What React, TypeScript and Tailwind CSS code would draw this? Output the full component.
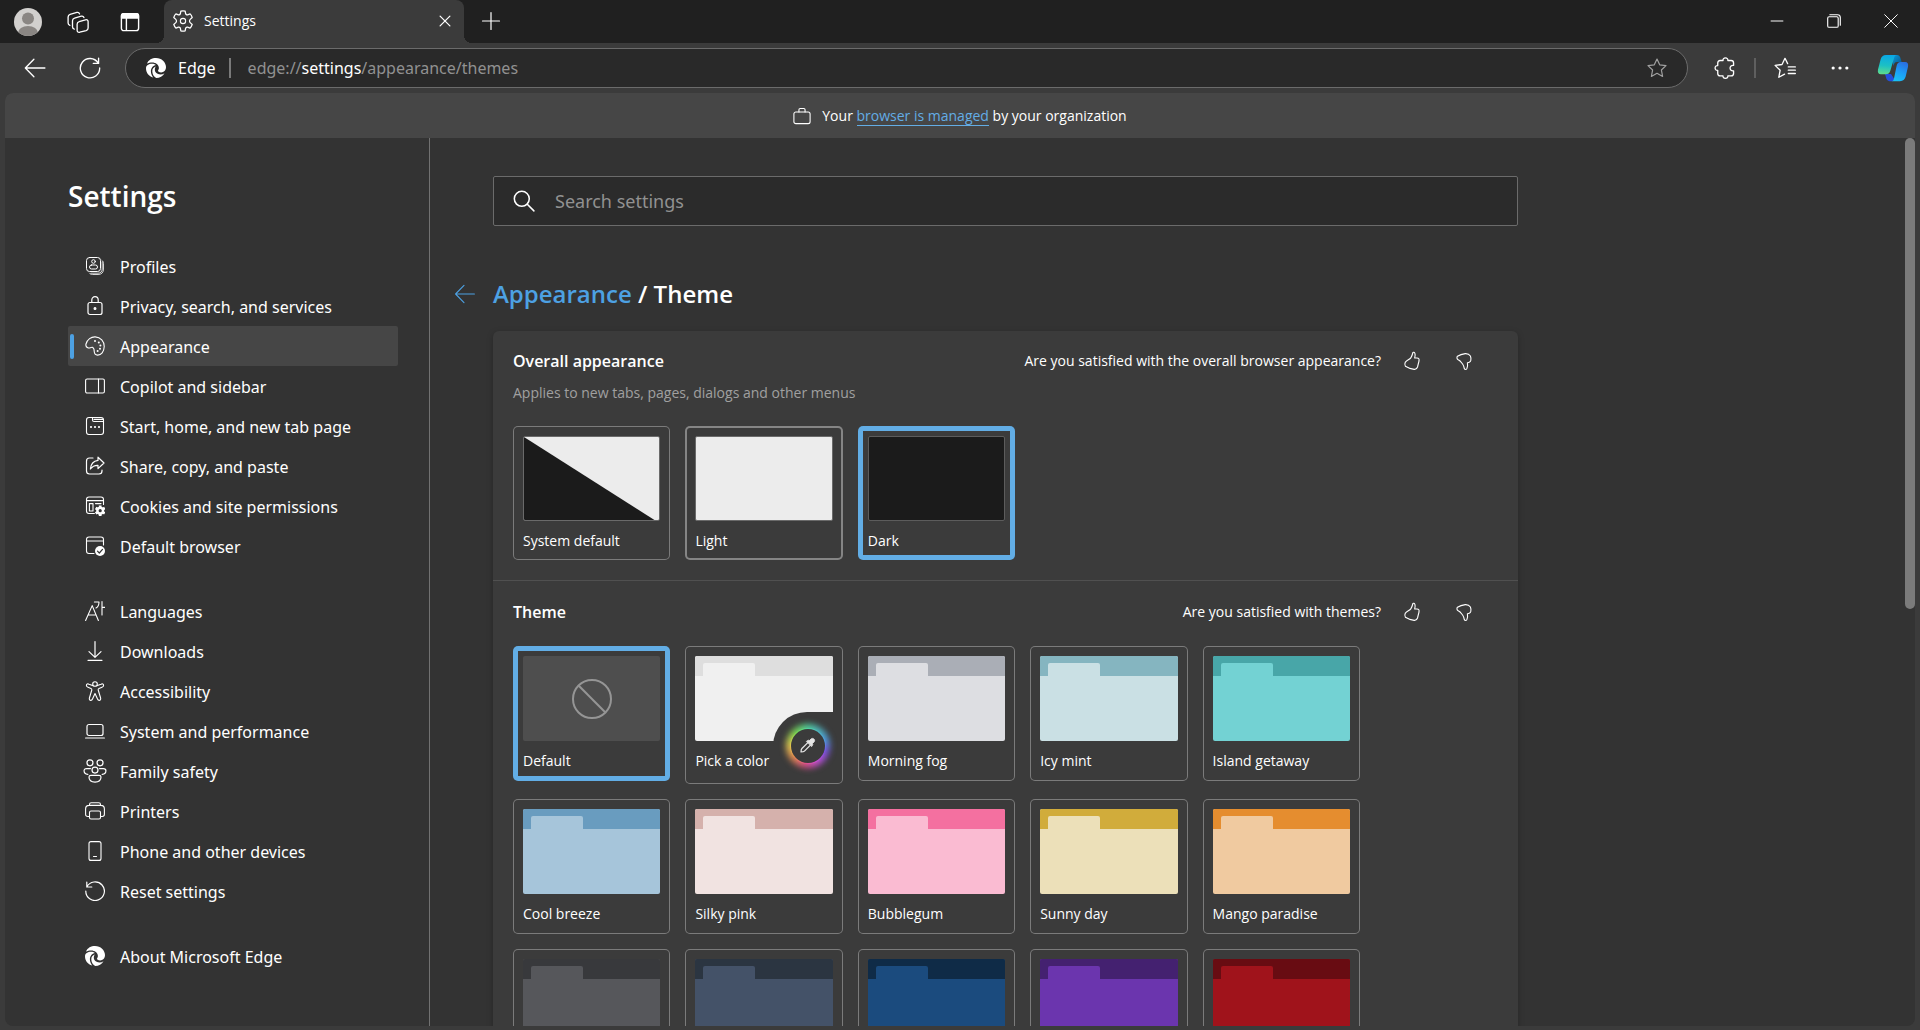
import type { ReactNode } from "react";

/* ---------- icon primitives ---------- */

function Icon({ children, size = 20, w = 1 }: { children: ReactNode; size?: number; w?: number }) {
  return (
    <svg
      width={size}
      height={size}
      viewBox="0 0 20 20"
      fill="none"
      stroke="currentColor"
      strokeWidth={w}
      strokeLinecap="round"
      strokeLinejoin="round"
      aria-hidden="true"
      className="shrink-0"
    >
      {children}
    </svg>
  );
}

const GEAR =
  "M8.3 2.2 C9.4 1.9 10.6 1.9 11.7 2.2 L12.1 4.3 C12.3 4.9 13 5.3 13.6 5.1 L15.6 4.4 C16.4 5.2 17 6.2 17.3 7.3 L15.7 8.7 C15 9.3 15 10.7 15.7 11.3 L17.3 12.7 C17 13.8 16.4 14.8 15.6 15.6 L13.6 14.9 C13 14.7 12.3 15.1 12.1 15.7 L11.7 17.8 C10.6 18.1 9.4 18.1 8.3 17.8 L7.9 15.7 C7.7 15.1 7 14.7 6.4 14.9 L4.4 15.6 C3.6 14.8 3 13.8 2.7 12.7 L4.3 11.3 C5 10.7 5 9.3 4.3 8.7 L2.7 7.3 C3 6.2 3.6 5.2 4.4 4.4 L6.4 5.1 C7 5.3 7.7 4.9 7.9 4.3 Z";

function EdgeLogo() {
  return (
    <svg width="20" height="20" viewBox="0 0 20 20" fill="currentColor" aria-hidden="true" className="shrink-0">
      <path d="M1 5.6 C2.6 1.8 6 0 10 0 C15.6 0 20 4.3 20 9.1 C20 12.4 17.8 14.4 15.2 14.4 C13 14.4 11.9 13.6 11.9 12.8 C11.9 12.2 12.9 11.6 12.9 9.9 C12.9 6.6 9.6 4.4 6.2 4.4 C4.1 4.4 2.3 4.8 1 5.6 Z" />
      <path d="M0 10.2 C0 7.3 2.8 5.7 5.9 5.7 C7.5 5.7 8.9 6.2 9.9 7 C7.2 7.5 4.9 9.9 4.9 13.2 C4.9 15.6 5.8 17.6 7.2 19.5 C3 18.4 0 14.7 0 10.2 Z" />
      <path d="M9.9 8.6 C9.2 9.4 8.8 10.4 8.8 11.6 C8.8 14.4 11.1 16.4 14.4 16.4 C16 16.4 17.4 16 18.5 15.2 C16.9 18.2 13.7 20 10.2 20 C7.7 18.6 6.3 16 6.3 13.2 C6.3 11 7.6 9.2 9.9 8.6 Z" />
    </svg>
  );
}

function CopilotLogo() {
  return (
    <svg width="32" height="28" viewBox="0 0 32 28" aria-hidden="true">
      <defs>
        <linearGradient id="cpLeft" x1="0.4" y1="0" x2="0.3" y2="1">
          <stop offset="0" stopColor="#0aa8e6" />
          <stop offset="0.55" stopColor="#1cc0c4" />
          <stop offset="1" stopColor="#5fdc8c" />
        </linearGradient>
        <linearGradient id="cpRight" x1="0.7" y1="0" x2="0.3" y2="1">
          <stop offset="0" stopColor="#2a6fe0" />
          <stop offset="0.5" stopColor="#1c9cf8" />
          <stop offset="1" stopColor="#19c2f4" />
        </linearGradient>
        <linearGradient id="cpTop" x1="0" y1="0" x2="1" y2="1">
          <stop offset="0" stopColor="#0aa0e0" />
          <stop offset="1" stopColor="#0b4f86" />
        </linearGradient>
      </defs>
      <path d="M14 1 H20 C22 1 23 2.4 23.6 4.4 L24.6 8 H20 C17.6 8 17 10 16.4 12 Z" fill="url(#cpTop)" />
      <path d="M8 20 H14 L18 26 C17 27 15.6 27.2 14 27.2 H12.6 C10.4 27.2 9.6 25.6 9 23.6 Z" fill="#2450dc" />
      <path d="M9 1 H20 C18.4 1 17.6 2.2 17 4.2 L13.4 16.4 C12.6 19 11.2 20.2 8.6 20.2 H4 C1.4 20.2 0.4 18.2 1 15.4 L3.6 5.4 C4.4 2.6 6 1 9 1 Z" fill="url(#cpLeft)" />
      <path d="M23 27.2 H14.6 C16 27.2 16.6 26 17 24.4 L19.6 12 C20.2 9.2 21.4 8 23.8 8 H28 C30.6 8 31.6 10 31 12.8 L28.6 22.8 C27.8 25.6 26 27.2 23 27.2 Z" fill="url(#cpRight)" />
    </svg>
  );
}

function ThumbUp() {
  return (
    <Icon size={20} w={1.1}>
      <path d="M10.9 1.5 C10.4 3.6 9.7 5.6 8.8 6.8 C7.6 8.4 4.6 9.4 3.2 11.4 C2.6 12.6 2.7 14 3.4 15.2 C6 16.8 9.6 18 12.2 18.4 C14 18.6 15 17.4 15.5 16 L17 10 C17.4 8 16.8 7 15 7 H12.7 C13.2 5.2 13.4 3.6 12.9 2.4 C12.5 1.4 11.2 0.9 10.9 1.5 Z" />
    </Icon>
  );
}

function ThumbDown() {
  return (
    <Icon size={20} w={1.1}>
      <path d="M3.5 5.2 C5.6 3.8 8.6 2.9 11.3 2.6 C13.6 2.5 15.4 3.4 16.4 5 C17 6.4 17.1 8 16.8 9.4 C16.3 11 15 11.8 13.4 11.8 C13.8 13.8 13.6 16.2 12.8 17.8 C12.2 18.8 10.8 18.8 10.4 17.8 C10 16 9.6 14.4 8.6 13 C7.2 11.2 6.4 9.8 4.2 8.8 C2.8 8 2.6 6.2 3.5 5.2 Z" />
    </Icon>
  );
}

/* ---------- side navigation ---------- */

type NavItem = { label: string; icon: ReactNode; active?: boolean };

const NAV_GROUPS: NavItem[][] = [
  [
    {
      label: "Profiles",
      icon: (
        <Icon>
          <rect x="1.5" y="1.5" width="14" height="14" rx="3" />
          <path d="M17 4.5 C18 5.2 18.5 6 18.5 7.5 V13 C18.5 16.5 16.5 18.5 13 18.5 H7.5 C6 18.5 5 18 4.5 17.2 M17.2 6 V13 C17.2 15.6 15.6 17.2 13 17.2 H6" strokeWidth="0.8" />
          <circle cx="8.5" cy="5.5" r="1.8" />
          <rect x="4.5" y="9" width="8" height="4" rx="2" />
        </Icon>
      ),
    },
    {
      label: "Privacy, search, and services",
      icon: (
        <Icon w={1.2}>
          <rect x="3" y="6.5" width="14" height="12" rx="2" />
          <path d="M6.8 6.5 V4 C6.8 2 8.2 0.7 10 0.7 C11.8 0.7 13.2 2 13.2 4 V6.5" />
          <circle cx="10" cy="12.5" r="0.9" fill="currentColor" />
        </Icon>
      ),
    },
    {
      label: "Appearance",
      active: true,
      icon: (
        <Icon w={1.1}>
          <path d="M1 8 C2.2 3.4 6.2 0.7 10.2 0.9 C15.6 1.1 19.4 5.4 19.2 10.8 C19 15.8 16.2 19.2 12.6 19.1 C10.4 19 9.3 17.4 9.2 15.2 C9.2 13.4 9.2 11.9 7.6 11.4 C5.8 10.9 4.6 12.6 2.8 11.8 C1 11 0.6 9.6 1 8 Z" />
          <g fill="currentColor" stroke="none">
            <circle cx="10" cy="5" r="1" />
            <circle cx="13.8" cy="6.4" r="1" />
            <circle cx="15.4" cy="9.6" r="1" />
            <circle cx="15" cy="12.8" r="1" />
            <circle cx="12.6" cy="15" r="1" />
          </g>
        </Icon>
      ),
    },
    {
      label: "Copilot and sidebar",
      icon: (
        <Icon w={1.1}>
          <rect x="0.6" y="3" width="18.8" height="14" rx="1.5" />
          <path d="M13.5 3 V17" />
        </Icon>
      ),
    },
    {
      label: "Start, home, and new tab page",
      icon: (
        <Icon w={1.1}>
          <rect x="1.5" y="1.5" width="17" height="17" rx="2.5" />
          <path d="M7.5 1.5 V4 C7.5 5 8 5.5 9 5.5 H18.5 M9 3.4 H18" />
          <path d="M6 11 h.01 M10 11 h.01 M14 11 h.01" strokeWidth="2.2" />
        </Icon>
      ),
    },
    {
      label: "Share, copy, and paste",
      icon: (
        <Icon w={1.2}>
          <path d="M8 2 H4.5 C2.8 2 1.5 3.3 1.5 5 V15 C1.5 16.7 2.8 18 4.5 18 H14 C15.7 18 17 16.7 17 15 V14" />
          <path d="M13 1.2 L19 7 L13 12.6 V9.4 C9.4 9.2 7.4 10.4 5.4 13 C5.8 8.4 8.6 5 13 4.4 Z" />
        </Icon>
      ),
    },
    {
      label: "Cookies and site permissions",
      icon: (
        <Icon w={1.1}>
          <path d="M9.4 17.5 H4 C2.5 17.5 1.5 16.5 1.5 15 V3.5 C1.5 2 2.5 1 4 1 H16 C17.5 1 18.5 2 18.5 3.5 V8.5 M1.5 4.6 H18.5 M10.5 7.6 H16" />
          <rect x="4.4" y="7.6" width="3.6" height="7.4" />
          <path d="M15.2 9.4 V20 M10.6 12 L19.8 17.4 M10.6 17.4 L19.8 12" strokeWidth="2.8" strokeLinecap="butt" />
          <circle cx="15.2" cy="14.7" r="2.8" strokeWidth="2.4" />
          <circle cx="15.2" cy="14.7" r="1.6" fill="#333333" stroke="none" />
        </Icon>
      ),
    },
    {
      label: "Default browser",
      icon: (
        <Icon w={1.1}>
          <path d="M9 17.5 H4 C2.5 17.5 1.5 16.5 1.5 15 V3.5 C1.5 2 2.5 1 4 1 H16 C17.5 1 18.5 2 18.5 3.5 V9 M1.5 5 H18.5" />
          <circle cx="15" cy="15" r="5" fill="currentColor" stroke="none" />
          <path d="M12.5 15.2 L14.3 17 L17.5 13.4" stroke="#333333" strokeWidth="1.2" />
        </Icon>
      ),
    },
  ],
  [
    {
      label: "Languages",
      icon: (
        <Icon w={1.1}>
          <path d="M0.6 19.5 L7.2 4.6 L13.4 19.5 M3.2 14 H11.2" />
          <path d="M9.4 1 H14 C14 4 13 6 11 7 M17 0.6 V14 M17 6.4 H19.8" />
        </Icon>
      ),
    },
    {
      label: "Downloads",
      icon: (
        <Icon w={1.2}>
          <path d="M10 0.6 V16 M4 10.6 L10 16.4 L16 10.6 M3 19.3 H17" />
        </Icon>
      ),
    },
    {
      label: "Accessibility",
      icon: (
        <Icon w={1.1}>
          <circle cx="10" cy="3" r="2.3" />
          <path d="M7.6 4.6 L4 3.2 C2.6 2.6 1.4 3 1.4 4.4 C1.4 5.4 2.2 5.9 3 6.2 L6 7.4 C6.8 7.8 7 8.2 6.8 9 L4.4 17 C4 18.4 4.8 19.4 5.8 19.4 C6.6 19.4 7.2 18.8 7.5 18 L10 12.6 L12.5 18 C12.8 18.8 13.4 19.4 14.2 19.4 C15.2 19.4 16 18.4 15.6 17 L13.2 9 C13 8.2 13.2 7.8 14 7.4 L17 6.2 C17.8 5.9 18.6 5.4 18.6 4.4 C18.6 3 17.4 2.6 16 3.2 L12.4 4.6" />
        </Icon>
      ),
    },
    {
      label: "System and performance",
      icon: (
        <Icon w={1.2}>
          <rect x="2" y="3.5" width="16" height="11" rx="2" />
          <path d="M0.6 17 H19.4" />
        </Icon>
      ),
    },
    {
      label: "Family safety",
      icon: (
        <Icon size={24} w={1}>
          <circle cx="5.8" cy="3.2" r="2.5" />
          <circle cx="14.2" cy="3.2" r="2.5" />
          <circle cx="10" cy="9.2" r="2.5" />
          <path d="M6.2 8 H3 C1.6 8 0.9 8.6 0.9 9.8 C0.9 11.6 2 12.6 4 12.8 M13.8 8 H17 C18.4 8 19.1 8.6 19.1 9.8 C19.1 11.6 18 12.6 16 12.8" />
          <path d="M6.6 13.6 H13.4 C14.4 13.6 15 14.1 15 15 C15 17.6 13 19.2 10 19.2 C7 19.2 5 17.6 5 15 C5 14.1 5.6 13.6 6.6 13.6 Z" />
        </Icon>
      ),
    },
    {
      label: "Printers",
      icon: (
        <Icon w={1.1}>
          <path d="M4.5 15.5 H2.8 C1.4 15.5 0.6 14.7 0.6 13.3 V8 C0.6 5.8 2 4.4 4.2 4.4 H15.8 C18 4.4 19.4 5.8 19.4 8 V13.3 C19.4 14.7 18.6 15.5 17.2 15.5 H15.5 M4.5 4.4 V3.4 C4.5 2.4 5.2 1.7 6.2 1.7 H13.8 C14.8 1.7 15.5 2.4 15.5 3.4 V4.4" />
          <rect x="4.5" y="10" width="11" height="8" rx="1.5" />
        </Icon>
      ),
    },
    {
      label: "Phone and other devices",
      icon: (
        <Icon w={1.1}>
          <rect x="4" y="0.6" width="12" height="18.8" rx="2" />
          <path d="M8.5 15.5 H11.5" />
        </Icon>
      ),
    },
    {
      label: "Reset settings",
      icon: (
        <Icon w={1.2}>
          <path d="M1.8 1 V6 H6.8 M1.8 6 A9.3 9.3 0 1 1 0.8 10" />
        </Icon>
      ),
    },
  ],
  [{ label: "About Microsoft Edge", icon: <EdgeLogo /> }],
];

function SideNav() {
  return (
    <aside className="w-[425px] shrink-0 border-r border-[#717171] pt-10 pr-[31px] pl-[63px]">
      <h1 className="text-[28px] leading-9 font-semibold">Settings</h1>
      <nav aria-label="Settings sections" className="mt-8 flex flex-col gap-[25px]">
        {NAV_GROUPS.map((group) => (
          <ul key={group[0].label}>
            {group.map((item) => (
              <li key={item.label}>
                <a
                  href={"#" + item.label}
                  aria-current={item.active ? "page" : undefined}
                  className={
                    item.active
                      ? "flex h-10 items-center rounded-xs bg-[#464646] pl-0.5"
                      : "flex h-10 items-center pl-0.5"
                  }
                >
                  <span className={item.active ? "h-[25px] w-1 rounded-xs bg-[#4da1e3]" : "w-1"} />
                  <span className="flex w-[42px] justify-center">{item.icon}</span>
                  <span className="pt-px pl-1 font-['Noto_Sans',sans-serif] text-base">{item.label}</span>
                </a>
              </li>
            ))}
          </ul>
        ))}
      </nav>
    </aside>
  );
}

/* ---------- tiles ---------- */

function Tile({
  label,
  selected,
  bold,
  padding = "pb-[10px]",
  name,
  children,
}: {
  label?: string;
  selected?: boolean;
  bold?: boolean;
  padding?: string;
  name: string;
  children: ReactNode;
}) {
  const ring = selected
    ? "shadow-[inset_0_0_0_5px_#62ade5]"
    : bold
      ? "shadow-[inset_0_0_0_2px_#858585]"
      : "shadow-[inset_0_0_0_1px_#7b7b7b]";
  return (
    <label className={`relative block rounded-[5px] px-[10px] pt-[10px] ${padding} ${ring}`}>
      <input type="radio" name={name} defaultChecked={selected} className="sr-only" />
      {children}
      <span className="mt-[10px] block h-5 text-sm whitespace-nowrap">{label}</span>
    </label>
  );
}

function FolderThumb({ top, body }: { top: string; body: string }) {
  return (
    <span className={`flex h-[85px] flex-col overflow-hidden rounded-xs ${body}`}>
      <span className={`flex h-5 items-end pl-2 ${top}`}>
        <span className={`h-[13px] w-[52px] rounded-t-xs ${body}`} />
      </span>
    </span>
  );
}

function ColorPickerBadge() {
  return (
    <span className="absolute right-[10px] bottom-[5px] flex h-[67px] w-[60px] items-center justify-center rounded-tl-[34px] bg-[#3b3b3b] pl-[10px]">
      <span className="relative flex size-9 items-center justify-center">
        <span className="absolute -inset-1 rounded-full bg-[conic-gradient(from_0deg,#4fd0a0,#4f9be0_20%,#7a4fe0_30%,#c84fd0_42%,#e04f8a_52%,#e0884f_64%,#e0c84f_76%,#7ad84f_88%,#4fd0a0)] blur-[3px]" />
        <span className="absolute inset-0 rounded-full bg-[conic-gradient(from_0deg,#4fd0a0,#4f9be0_20%,#7a4fe0_30%,#c84fd0_42%,#e04f8a_52%,#e0884f_64%,#e0c84f_76%,#7ad84f_88%,#4fd0a0)]" />
        <span className="relative flex size-[34px] items-center justify-center rounded-full bg-[#3b3b3b] text-[#e6e6e6]">
          <Icon size={17} w={1.5}>
            <path d="M10.4 6.6 L3.4 13.6 C2.6 14.4 2.4 15.4 2.4 17.6 C4.6 17.6 5.6 17.4 6.4 16.6 L13.4 9.6" />
            <path d="M9 5 L11 3.8 L12.4 4.2 L14 2.4 C15 1.4 16.6 1.4 17.6 2.4 C18.6 3.4 18.6 5 17.6 6 L15.8 7.6 L16.2 9 L15 11 Z" fill="currentColor" strokeWidth="1" />
          </Icon>
        </span>
      </span>
    </span>
  );
}

const THEMES: { label?: string; top: string; body: string }[] = [
  { label: "Morning fog", top: "bg-[#aaaeb6]", body: "bg-[#dddee2]" },
  { label: "Icy mint", top: "bg-[#85b5c0]", body: "bg-[#cae0e4]" },
  { label: "Island getaway", top: "bg-[#48a6a8]", body: "bg-[#73d2d3]" },
  { label: "Cool breeze", top: "bg-[#699cbf]", body: "bg-[#a6c5da]" },
  { label: "Silky pink", top: "bg-[#d5b1ac]", body: "bg-[#f1e3e1]" },
  { label: "Bubblegum", top: "bg-[#f470a0]", body: "bg-[#fabbd2]" },
  { label: "Sunny day", top: "bg-[#d1ac3b]", body: "bg-[#ece0b9]" },
  { label: "Mango paradise", top: "bg-[#e58d2f]", body: "bg-[#f0caa0]" },
  { top: "bg-[#38393c]", body: "bg-[#56575b]" },
  { top: "bg-[#2b3541]", body: "bg-[#445268]" },
  { top: "bg-[#0f2b47]", body: "bg-[#1b4b7e]" },
  { top: "bg-[#442170]", body: "bg-[#6b35ae]" },
  { top: "bg-[#680c12]", body: "bg-[#a0131b]" },
];

function SectionHead({ title, question }: { title: string; question: string }) {
  return (
    <div className="flex items-center">
      <h3 className="flex-1 text-base leading-6 font-semibold">{title}</h3>
      <p className="text-sm">{question}</p>
      <div className="flex gap-8 pr-6 pl-[21px]">
        <button type="button" aria-label="Yes">
          <ThumbUp />
        </button>
        <button type="button" aria-label="No">
          <ThumbDown />
        </button>
      </div>
    </div>
  );
}

function ThemeCard() {
  return (
    <section className="mt-[21px] rounded-md bg-[#3b3b3b] shadow-[0_2px_6px_rgba(0,0,0,0.25)]">
      <div className="px-5 pt-[18px] pb-5">
        <SectionHead title="Overall appearance" question="Are you satisfied with the overall browser appearance?" />
        <p className="mt-[10px] text-sm leading-5 text-[#a0a0a0]">
          Applies to new tabs, pages, dialogs and other menus
        </p>
        <div className="mt-[23px] grid max-w-[847px] grid-cols-5 gap-[15px]">
          <Tile name="appearance" label="System default" padding="pb-[9px]">
            <svg viewBox="0 0 137 85" preserveAspectRatio="none" className="block h-[85px] w-full rounded-xs border border-[#6a6a6a]" aria-hidden="true">
              <rect width="137" height="85" fill="#ececec" />
              <path d="M0 0 L132 85 H0 Z" fill="#1b1b1b" />
            </svg>
          </Tile>
          <Tile name="appearance" label="Light" bold padding="pb-[9px]">
            <span className="block h-[85px] rounded-xs border border-[#6a6a6a] bg-[#ececec]" />
          </Tile>
          <Tile name="appearance" label="Dark" selected padding="pb-[9px]">
            <span className="block h-[85px] rounded-xs border border-[#5c5c5c] bg-[#1b1b1b]" />
          </Tile>
        </div>
      </div>
      <div className="border-t border-[#505050] px-5 pt-[19px] pb-5">
        <SectionHead title="Theme" question="Are you satisfied with themes?" />
        <div className="mt-[22px] grid max-w-[847px] grid-cols-5 items-start gap-[15px]">
          <Tile name="theme" label="Default" selected>
            <span className="flex h-[85px] items-center justify-center rounded-xs bg-[#4e4e4e] text-[#959595]">
              <Icon size={40}>
                <circle cx="10" cy="10" r="9.5" />
                <path d="M3.4 3.4 L16.6 16.6" />
              </Icon>
            </span>
          </Tile>
          <Tile name="theme" label="Pick a color" padding="pb-[13px]">
            <FolderThumb top="bg-[#dedede]" body="bg-[#f0f0f0]" />
            <ColorPickerBadge />
          </Tile>
          {THEMES.map((theme) => (
            <Tile key={theme.top} name="theme" label={theme.label}>
              <FolderThumb top={theme.top} body={theme.body} />
            </Tile>
          ))}
        </div>
      </div>
    </section>
  );
}

/* ---------- browser chrome ---------- */

function TabStrip() {
  return (
    <header className="flex h-[43px] items-center bg-[#202020]">
      <div className="flex w-[164px] items-center pl-[14px]">
        <button type="button" aria-label="Profile">
          <svg width="28" height="28" viewBox="0 0 28 28" aria-hidden="true">
            <clipPath id="avatar">
              <circle cx="14" cy="14" r="14" />
            </clipPath>
            <g clipPath="url(#avatar)">
              <rect width="28" height="28" fill="#d2d0ce" />
              <circle cx="14" cy="10.5" r="6" fill="#8a8683" />
              <ellipse cx="14" cy="25" rx="10" ry="7" fill="#8a8683" />
            </g>
          </svg>
        </button>
        <button type="button" aria-label="Workspaces" className="ml-[25px]">
          <Icon size={22} w={1.2}>
            <path d="M11 9.6 L16.8 8 C18.2 7.6 19.2 8.4 19.2 9.8 V15.4 C19.2 16.6 18.6 17.4 17.4 17.8 L11.6 19.3 C10.2 19.6 9.2 18.9 9.2 17.5 V12 C9.2 10.7 9.8 9.9 11 9.6 Z" />
            <path d="M6.6 16.4 C5.4 16.2 5 15.5 5 14.4 V8.8 C5 7.5 5.6 6.7 6.8 6.4 L13 4.7 C14.2 4.4 15 4.9 15.4 6" />
            <path d="M2.6 13 C1.5 12.7 1 12 1 11 V5.4 C1 4.1 1.6 3.4 2.8 3 L9 1.3 C10.2 1 11 1.5 11.4 2.6" />
          </Icon>
        </button>
        <button type="button" aria-label="Tab actions" className="ml-[31px]">
          <Icon size={20} w={1.4}>
            <rect x="1.4" y="1.6" width="17.2" height="17" rx="2.4" />
            <path d="M1.6 3.4 C1.6 2.4 2.4 1.6 3.4 1.6 H16.6 C17.6 1.6 18.4 2.4 18.4 3.4 V6 H1.6 Z" fill="currentColor" />
            <path d="M6.4 6 V18.4" />
          </Icon>
        </button>
      </div>
      <div className="relative flex h-full w-[300px] items-center rounded-t-lg bg-[#3b3b3b] pr-3 pb-0.5 pl-2">
        <span className="absolute bottom-0 -left-2 size-2 bg-[radial-gradient(circle_at_0_0,#202020_8px,#3b3b3b_8px)]" />
        <span className="absolute -right-2 bottom-0 size-2 bg-[radial-gradient(circle_at_100%_0,#202020_8px,#3b3b3b_8px)]" />
        <Icon size={22}>
          <path d={GEAR} transform="translate(-1.5 -1.5) scale(1.15)" />
          <circle cx="10" cy="10" r="2.4" />
        </Icon>
        <span className="flex-1 pl-[10px] text-sm">Settings</span>
        <button type="button" aria-label="Close tab">
          <Icon size={14} w={1.8}>
            <path d="M3 3 L17 17 M17 3 L3 17" />
          </Icon>
        </button>
      </div>
      <button type="button" aria-label="New tab" className="ml-[17px] pb-0.5">
        <Icon size={20} w={1.2}>
          <path d="M10 1.5 V18.5 M1.5 10 H18.5" />
        </Icon>
      </button>
      <div className="ml-auto flex items-center gap-[43px] pr-[22px] pb-0.5">
        <button type="button" aria-label="Minimize">
          <Icon size={14} w={1.4}>
            <path d="M1 10 H19" strokeLinecap="butt" />
          </Icon>
        </button>
        <button type="button" aria-label="Restore">
          <Icon size={14} w={1.6}>
            <rect x="1" y="4" width="15" height="15" rx="2" />
            <path d="M4 1 H15 C17.6 1 19 2.4 19 5 V16" />
          </Icon>
        </button>
        <button type="button" aria-label="Close window">
          <Icon size={14} w={1.4}>
            <path d="M1 1 L19 19 M19 1 L1 19" />
          </Icon>
        </button>
      </div>
    </header>
  );
}

const STAR = "M10 1 L12.7 6.8 L19 7.6 L14.4 12 L15.6 18.4 L10 15.3 L4.4 18.4 L5.6 12 L1 7.6 L7.3 6.8 Z";

function Toolbar() {
  return (
    <div className="flex h-[50px] items-center bg-[#3b3b3b] pr-[11px] pl-6">
      <button type="button" aria-label="Back">
        <Icon size={22} w={1.2}>
          <path d="M19 10 H1.4 M9 2 L1.2 10 L9 18" />
        </Icon>
      </button>
      <button type="button" aria-label="Refresh" className="ml-[33px]">
        <Icon size={22} w={1.2}>
          <path d="M17.4 5.4 A8.8 8.8 0 1 0 18.8 10 M17.8 1 V5.8 H13" />
        </Icon>
      </button>
      <div className="ml-6 flex h-10 flex-1 items-center rounded-full border border-[#6b6b6b] bg-[#292929] px-5 font-['Noto_Sans',sans-serif]">
        <EdgeLogo />
        <span className="pl-3 text-base">Edge</span>
        <span className="mr-[17px] ml-[13px] h-5 w-0.5 bg-[#7a7a7a]" />
        <p className="flex-1 text-base text-[#919191]" aria-label="Address">
          edge://<span className="text-white">settings</span>/appearance/themes
        </p>
        <button type="button" aria-label="Add to favorites" className="text-[#a0a0a0]">
          <Icon size={20} w={1.2}>
            <path d={STAR} />
          </Icon>
        </button>
      </div>
      <button type="button" aria-label="Extensions" className="ml-[26px]">
        <Icon size={22} w={1.2}>
          <path d="M17.8 7.6 V5.4 C17.8 4 17 3.2 15.6 3.2 H12.6 C12.8 1.8 11.8 0.8 10.4 0.8 C9 0.8 8 1.8 8.2 3.2 H5.6 C4.2 3.2 3.4 4 3.4 5.4 V7.8 C2 7.6 1 8.6 1 10 C1 11.4 2 12.4 3.4 12.2 V15 C3.4 16.4 4.2 17.2 5.6 17.2 H8.2 C8 18.6 9 19.4 10.4 19.4 C11.8 19.4 12.8 18.6 12.6 17.2 H15.6 C17 17.2 17.8 16.4 17.8 15 V12.6 C15.8 12.9 14.6 11.8 14.6 10.1 C14.6 8.4 15.8 7.3 17.8 7.6 Z" />
        </Icon>
      </button>
      <span className="mx-[18px] h-5 w-0.5 bg-[#5f5f5f]" />
      <button type="button" aria-label="Favorites">
        <Icon size={22} w={1.2}>
          <path d="M12.4 6 L10 1.2 L7.3 6.8 L1 7.6 L5.6 12 L4.4 18.4 L9.6 15.6 M13 9 H19.4 M13 12 H19.4 M13 15 H19.4" />
        </Icon>
      </button>
      <button type="button" aria-label="Settings and more" className="ml-[35px]">
        <Icon size={18}>
          <g fill="currentColor" stroke="none">
            <circle cx="2.4" cy="10" r="1.8" />
            <circle cx="10" cy="10" r="1.8" />
            <circle cx="17.6" cy="10" r="1.8" />
          </g>
        </Icon>
      </button>
      <button type="button" aria-label="Copilot" className="ml-7">
        <CopilotLogo />
      </button>
    </div>
  );
}

export default function App() {
  return (
    <div className="flex h-screen flex-col overflow-hidden bg-[#3b3b3b] font-['Open_Sans',sans-serif] text-white">
      <TabStrip />
      <Toolbar />
      <div className="mx-[5px] mb-1 flex min-h-0 flex-1 flex-col overflow-hidden rounded-lg bg-[#333333]">
        <div className="flex h-[45px] shrink-0 items-center justify-center gap-[11px] bg-[#464646] text-sm">
          <Icon size={18} w={1.2}>
            <rect x="1" y="5.5" width="18" height="13" rx="2.2" />
            <path d="M6.6 5.5 V3 C6.6 2 7 1.6 8 1.6 H12 C13 1.6 13.4 2 13.4 3 V5.5" />
          </Icon>
          <p>
            Your{" "}
            <a href="#managed" className="border-b border-[#63ade5] text-[#63ade5]">
              browser is managed
            </a>{" "}
            by your organization
          </p>
        </div>
        <div className="flex min-h-0 flex-1">
          <SideNav />
          <main className="min-w-0 flex-1 overflow-hidden pt-[38px] pl-[25px]">
            <div className="max-w-[1063px] pl-[38px]">
              <label className="flex h-[50px] items-center gap-5 rounded-xs border border-[#6b6b6b] bg-[#2b2b2b] pl-[19px]">
                <Icon size={22} w={1.4}>
                  <circle cx="8" cy="8" r="6.8" />
                  <path d="M13 13 L19 19" />
                </Icon>
                <input
                  type="search"
                  aria-label="Search settings"
                  placeholder="Search settings"
                  className="h-full flex-1 bg-transparent font-['Noto_Sans',sans-serif] text-lg outline-none placeholder:text-[#919191]"
                />
              </label>
            </div>
            <div className="max-w-[1063px]">
              <div className="mt-[52px] flex h-8 items-center">
                <button type="button" aria-label="Back to Appearance" className="w-[38px] text-[#4da1e3]">
                  <Icon size={20} w={1.1}>
                    <path d="M19.4 10 H0.8 M9 1.4 L0.6 10 L9 18.6" />
                  </Icon>
                </button>
                <h2 className="text-2xl font-semibold">
                  <a href="#appearance" className="text-[#4da1e3]">
                    Appearance
                  </a>{" "}
                  / Theme
                </h2>
              </div>
              <div className="pl-[38px]">
                <ThemeCard />
              </div>
            </div>
          </main>
          <div className="w-[10px] shrink-0">
            <div className="h-[471px] rounded-full bg-[#7b7b7b]" />
          </div>
        </div>
      </div>
    </div>
  );
}
